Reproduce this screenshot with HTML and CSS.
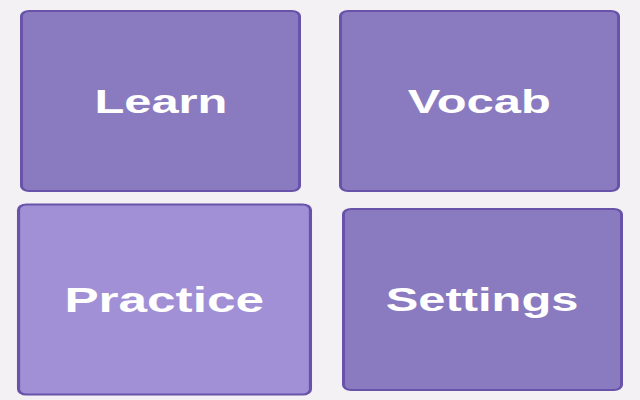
FILE: index.html
```html
<!DOCTYPE html>
<html lang="en">
<head>
<meta charset="utf-8">
<title>Menu</title>
<link rel="stylesheet" href="styles.css">
</head>
<body>
<main class="menu">
  <a class="tile" href="#"><span class="label">Learn</span></a>
  <a class="tile" href="#"><span class="label">Vocab</span></a>
  <a class="tile tile-low tile-hover" href="#"><span class="label">Practice</span></a>
  <a class="tile tile-low" href="#"><span class="label">Settings</span></a>
</main>
</body>
</html>
```

FILE: styles.css
```css
html, body {
  margin: 0;
  padding: 0;
  background: #f3f1f3;
  width: 640px;
  height: 400px;
  overflow: hidden;
}

.menu {
  display: grid;
  grid-template-columns: 281px 281px;
  grid-template-rows: 182px 183px;
  column-gap: 38px;
  row-gap: 16px;
  padding: 10px 20px 9px 20px;
}

.tile {
  display: flex;
  align-items: center;
  justify-content: center;
  box-sizing: border-box;
  background: #8a7bc1;
  border-style: solid;
  border-color: #6953aa;
  border-width: 2px 3px;
  border-radius: 9px / 6px;
  text-decoration: none;
}

.tile-low {
  transform: translateX(3px);
}

.tile-hover {
  background: #a190d5;
  transform: translateX(4px) scale(1.05);
}

.label {
  display: inline-block;
  color: #ffffff;
  font-family: "Liberation Sans", Arial, sans-serif;
  font-weight: bold;
  font-size: 33px;
  line-height: 1;
  transform: scaleX(1.48);
}
```
